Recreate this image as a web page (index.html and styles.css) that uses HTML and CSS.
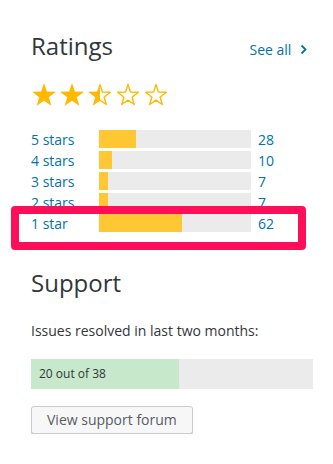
FILE: index.html
```html
<!DOCTYPE html>
<html lang="en">
<head>
    <meta charset="UTF-8">
    <meta name="viewport" content="width=device-width, initial-scale=1.0">
    <title>Ratings</title>
    <link rel="stylesheet" href="styles.css">
</head>
<body>
    <div class="sidebar">
        <div class="ratings">
            <div class="section-header">
                <h2>Ratings</h2>
                <a href="#" class="see-all">See all
                    <svg width="7" height="11" viewBox="0 0 7 11"><path d="M1.5 1.5 L5.5 5.5 L1.5 9.5" fill="none" stroke="#0073aa" stroke-width="1.8"/></svg>
                </a>
            </div>

            <div class="stars">
                <svg class="star" viewBox="0 0 24 23"><path class="full" d="M12 0 L14.9 8.4 L23.98 8.71 L16.8 14.2 L19.41 22.79 L12 17.8 L4.59 22.79 L7.2 14.2 L0.02 8.71 L9.1 8.4 Z"/></svg>
                <svg class="star" viewBox="0 0 24 23"><path class="full" d="M12 0 L14.9 8.4 L23.98 8.71 L16.8 14.2 L19.41 22.79 L12 17.8 L4.59 22.79 L7.2 14.2 L0.02 8.71 L9.1 8.4 Z"/></svg>
                <svg class="star" viewBox="0 0 24 23">
                    <path class="full" d="M12 0 L12 17.8 L4.59 22.79 L7.2 14.2 L0.02 8.71 L9.1 8.4 Z"/>
                    <path class="empty" d="M12 1.4 L14.4 9.1 L22.4 9.3 L16.1 14.2 L18.3 21.5 L12 17.2"/>
                </svg>
                <svg class="star" viewBox="0 0 24 23"><path class="empty" d="M12 1.4 L14.4 9.1 L22.4 9.3 L16.1 14.2 L18.3 21.5 L12 17.2 L5.7 21.5 L7.9 14.2 L1.6 9.3 L9.6 9.1 Z"/></svg>
                <svg class="star" viewBox="0 0 24 23"><path class="empty" d="M12 1.4 L14.4 9.1 L22.4 9.3 L16.1 14.2 L18.3 21.5 L12 17.2 L5.7 21.5 L7.9 14.2 L1.6 9.3 L9.6 9.1 Z"/></svg>
            </div>

            <ul class="ratings-list">
                <li class="counter">
                    <a href="#" class="counter-label">5 stars</a>
                    <span class="counter-back"><span class="counter-bar" style="width: 24.6%"></span></span>
                    <a href="#" class="counter-count">28</a>
                </li>
                <li class="counter">
                    <a href="#" class="counter-label">4 stars</a>
                    <span class="counter-back"><span class="counter-bar" style="width: 8.8%"></span></span>
                    <a href="#" class="counter-count">10</a>
                </li>
                <li class="counter">
                    <a href="#" class="counter-label">3 stars</a>
                    <span class="counter-back"><span class="counter-bar" style="width: 6.1%"></span></span>
                    <a href="#" class="counter-count">7</a>
                </li>
                <li class="counter">
                    <a href="#" class="counter-label">2 stars</a>
                    <span class="counter-back"><span class="counter-bar" style="width: 6.1%"></span></span>
                    <a href="#" class="counter-count">7</a>
                </li>
                <li class="counter">
                    <a href="#" class="counter-label">1 star</a>
                    <span class="counter-back"><span class="counter-bar" style="width: 54.4%"></span></span>
                    <a href="#" class="counter-count">62</a>
                    <span class="highlight"></span>
                </li>
            </ul>
        </div>

        <div class="support">
            <h2>Support</h2>
            <p>Issues resolved in last two months:</p>
            <div class="resolved">
                <span class="resolved-bar" style="width: 52.6%"></span>
                <span class="resolved-text">20 out of 38</span>
            </div>
            <a href="#" class="button">View support forum</a>
        </div>
    </div>
</body>
</html>
```

FILE: styles.css
```css
body {
    margin: 0;
    font-family: "Open Sans", sans-serif;
    color: #32373c;
    background: #fff;
}
a {
    color: #0073aa;
    text-decoration: none;
}
.sidebar {
    width: 282px;
    padding: 30px 0 0 31px;
}
.section-header {
    display: flex;
    justify-content: space-between;
    align-items: baseline;
}
h2 {
    margin: 0;
    font-size: 24px;
    font-weight: 400;
    line-height: 32px;
}
.see-all {
    font-size: 14px;
    margin-right: 6px;
}
.see-all svg {
    margin-left: 5px;
}
.stars {
    display: flex;
    gap: 4px;
    margin-top: 21px;
    margin-left: 1px;
}
.star {
    width: 24px;
    height: 23px;
    overflow: visible;
}
.star .full {
    fill: #ffb900;
}
.star .empty {
    fill: none;
    stroke: #ffb900;
    stroke-width: 1.4;
    stroke-linejoin: round;
}
.ratings-list {
    list-style: none;
    margin: 24px 0 0;
    padding: 0;
}
.counter {
    position: relative;
    display: flex;
    align-items: center;
    height: 18px;
    margin-bottom: 3px;
    font-size: 14px;
}
.counter-label {
    width: 68px;
}
.counter-back {
    width: 152px;
    height: 18px;
    background: #ebebeb;
}
.counter-bar {
    display: block;
    height: 100%;
    background: #ffc733;
}
.counter-count {
    margin-left: 7px;
}
.highlight {
    position: absolute;
    left: -20px;
    top: -8px;
    width: 279px;
    height: 28px;
    border: 8px solid #ff0f5a;
    border-radius: 4px;
}
.support {
    margin-top: 35px;
}
.support p {
    margin: 22px 0 0;
    font-size: 14px;
    line-height: 20px;
}
.resolved {
    position: relative;
    height: 30px;
    margin-top: 18px;
    background: #ebebeb;
}
.resolved-bar {
    display: block;
    height: 100%;
    background: #c7e8ca;
}
.resolved-text {
    position: absolute;
    left: 8px;
    top: 0;
    line-height: 30px;
    font-size: 12px;
}
.button {
    display: inline-block;
    margin-top: 17px;
    padding: 0 15px;
    height: 26px;
    line-height: 26px;
    font-size: 14px;
    color: #555d66;
    background: #f7f7f7;
    border: 1px solid #ccc;
    border-radius: 3px;
    box-shadow: 0 1px 0 #ccc;
}
```
